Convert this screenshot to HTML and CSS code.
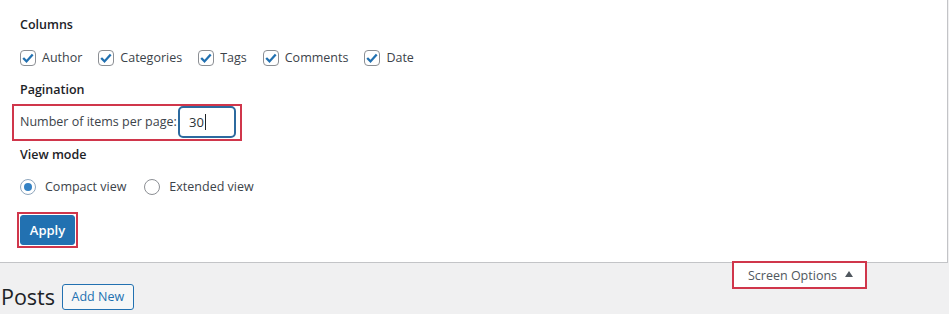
FILE: index.html
```html
<!DOCTYPE html>
<html lang="en">
<head>
<meta charset="utf-8">
<title>Posts - Screen Options</title>
<link rel="stylesheet" href="styles.css">
</head>
<body>
<div class="screen-meta">
  <fieldset class="group">
    <div class="legend legend-first">Columns</div>
    <div class="options">
      <label class="opt"><span class="cb"><svg viewBox="0 0 16 16" width="16" height="16"><path d="M3.2 8l3.3 3.4 6.2-7" fill="none" stroke="#2271b1" stroke-width="2.3"/></svg></span>Author</label>
      <label class="opt"><span class="cb"><svg viewBox="0 0 16 16" width="16" height="16"><path d="M3.2 8l3.3 3.4 6.2-7" fill="none" stroke="#2271b1" stroke-width="2.3"/></svg></span>Categories</label>
      <label class="opt"><span class="cb"><svg viewBox="0 0 16 16" width="16" height="16"><path d="M3.2 8l3.3 3.4 6.2-7" fill="none" stroke="#2271b1" stroke-width="2.3"/></svg></span>Tags</label>
      <label class="opt"><span class="cb"><svg viewBox="0 0 16 16" width="16" height="16"><path d="M3.2 8l3.3 3.4 6.2-7" fill="none" stroke="#2271b1" stroke-width="2.3"/></svg></span>Comments</label>
      <label class="opt"><span class="cb"><svg viewBox="0 0 16 16" width="16" height="16"><path d="M3.2 8l3.3 3.4 6.2-7" fill="none" stroke="#2271b1" stroke-width="2.3"/></svg></span>Date</label>
    </div>
  </fieldset>
  <fieldset class="group">
    <div class="legend legend-pag">Pagination</div>
    <div class="highlight per-page">
      <span class="per-page-label">Number of items per page:</span>
      <span class="num-input">30<span class="caret"></span></span>
    </div>
  </fieldset>
  <fieldset class="group">
    <div class="legend legend-tight">View mode</div>
    <div class="options radios">
      <label class="opt"><span class="radio checked"></span>Compact view</label>
      <label class="opt"><span class="radio"></span>Extended view</label>
    </div>
  </fieldset>
  <div class="highlight apply-wrap">
    <button class="btn-primary" type="button">Apply</button>
  </div>
</div>
<div class="below">
  <div class="meta-links">
    <button class="highlight tab" type="button">Screen Options <span class="tri"></span></button>
  </div>
  <div class="title-row">
    <h1 class="page-title">Posts</h1>
    <a class="add-new" href="#">Add New</a>
  </div>
</div>
</body>
</html>
```

FILE: styles.css
```css
html, body {
  margin: 0;
  padding: 0;
}
body {
  background: #f0f0f1;
  color: #3c434a;
  font-family: "Open Sans", "Noto Sans", sans-serif;
  font-size: 12.5px;
  line-height: 18px;
}
.screen-meta {
  box-sizing: border-box;
  width: 948px;
  height: 263px;
  background: #fff;
  border-right: 1px solid #c3c4c7;
  border-bottom: 1px solid #c3c4c7;
  padding: 16px 0 0 0;
}
.group {
  border: 0;
  margin: 0;
  padding: 0;
}
.legend {
  font-weight: 600;
  color: #1d2327;
  padding-left: 20px;
  height: 18px;
}
.legend-first {
  margin-top: 0;
}
.legend-pag {
  margin-top: 14px;
}
.legend-tight {
  margin-top: 5px;
}
.options {
  display: flex;
  align-items: center;
  height: 18px;
  padding-left: 20px;
  margin-top: 15px;
}
.opt {
  display: flex;
  align-items: center;
  margin-right: 16px;
}
.cb {
  box-sizing: border-box;
  width: 16px;
  height: 16px;
  border: 1px solid #8c8f94;
  border-radius: 4px;
  margin-right: 6px;
  display: flex;
  align-items: center;
  justify-content: center;
  background: #fff;
}
.cb svg {
  display: block;
  flex: none;
}
.highlight {
  border: 2px solid #d0364b;
}
.per-page {
  box-sizing: border-box;
  display: flex;
  align-items: center;
  width: 230px;
  height: 37px;
  margin: 5px 0 0 12px;
  padding: 0 4px 1px 6px;
}
.per-page-label {
  flex: 1;
}
.num-input {
  box-sizing: border-box;
  width: 58px;
  height: 32px;
  border: 2px solid #2c6a9f;
  border-radius: 5px;
  padding-left: 9px;
  display: flex;
  align-items: center;
  color: #2c3338;
  font-size: 13px;
}
.caret {
  display: inline-block;
  width: 1px;
  height: 16px;
  background: #1d2327;
  margin-left: 1px;
}
.radios {
  margin-top: 14px;
}
.radio {
  box-sizing: border-box;
  width: 16px;
  height: 16px;
  border: 1px solid #8c8f94;
  border-radius: 50%;
  margin-right: 9px;
  background: #fff;
  display: flex;
  align-items: center;
  justify-content: center;
}
.radio.checked {
  border-color: #8fa6bd;
}
.radio.checked::before {
  content: "";
  width: 8px;
  height: 8px;
  border-radius: 50%;
  background: #3582c4;
}
.radios .opt {
  margin-right: 18px;
}
.apply-wrap {
  display: inline-flex;
  padding: 1px;
  margin: 16px 0 0 17px;
}
.btn-primary {
  box-sizing: border-box;
  width: 55px;
  height: 30px;
  background: #2271b1;
  border: 1px solid #2271b1;
  border-radius: 3px;
  color: #fff;
  font-family: inherit;
  font-size: 13px;
  font-weight: 600;
  padding: 0;
  cursor: pointer;
}
.below {
  position: relative;
}
.meta-links {
  float: right;
  margin: -2px 82px 0 0;
}
.tab {
  box-sizing: border-box;
  display: flex;
  align-items: center;
  width: 135px;
  height: 28px;
  background: #fff;
  color: #50575e;
  font-family: inherit;
  font-size: 12.5px;
  padding: 0 0 0 14px;
  cursor: pointer;
}
.tri {
  width: 0;
  height: 0;
  border-left: 4px solid transparent;
  border-right: 4px solid transparent;
  border-bottom: 6px solid #50575e;
  margin-left: 8px;
  margin-bottom: 2px;
}
.title-row {
  display: flex;
  align-items: center;
  padding: 19px 0 0 1px;
}
.page-title {
  margin: 0;
  font-size: 21.5px;
  font-weight: 400;
  line-height: 30px;
  color: #1d2327;
}
.add-new {
  box-sizing: border-box;
  margin-left: 7px;
  height: 26px;
  padding: 0 8.5px;
  display: flex;
  align-items: center;
  border: 1px solid #2271b1;
  border-radius: 3px;
  background: #f6f7f7;
  color: #2271b1;
  font-size: 12.5px;
  font-weight: 500;
  text-decoration: none;
}
```
